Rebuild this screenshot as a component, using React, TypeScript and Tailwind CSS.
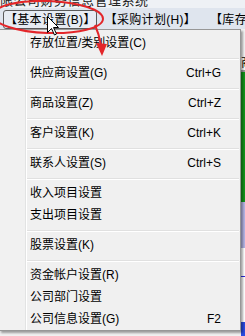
import type { ReactNode } from "react";

type Entry =
  | { kind: "item"; label: string; shortcut?: string }
  | { kind: "sep" };

const entries: Entry[] = [
  { kind: "item", label: "存放位置/类别设置(C)" },
  { kind: "sep" },
  { kind: "item", label: "供应商设置(G)", shortcut: "Ctrl+G" },
  { kind: "sep" },
  { kind: "item", label: "商品设置(Z)", shortcut: "Ctrl+Z" },
  { kind: "sep" },
  { kind: "item", label: "客户设置(K)", shortcut: "Ctrl+K" },
  { kind: "sep" },
  { kind: "item", label: "联系人设置(S)", shortcut: "Ctrl+S" },
  { kind: "sep" },
  { kind: "item", label: "收入项目设置" },
  { kind: "item", label: "支出项目设置" },
  { kind: "sep" },
  { kind: "item", label: "股票设置(K)" },
  { kind: "sep" },
  { kind: "item", label: "资金帐户设置(R)" },
  { kind: "item", label: "公司部门设置" },
  { kind: "item", label: "公司信息设置(G)", shortcut: "F2" },
];

function MenuRow({ children, shortcut }: { children: ReactNode; shortcut?: string }) {
  return (
    <div className="flex h-[22px] items-center justify-between pl-[3px] pr-[19px]">
      <span>{children}</span>
      {shortcut && <span>{shortcut}</span>}
    </div>
  );
}

function Separator() {
  return (
    <div className="mr-[1px] pt-[4px] pb-[2px]">
      <div className="h-px bg-[#e0e0e0]" />
      <div className="h-px bg-white" />
    </div>
  );
}

// annotation drawn on top of the screenshot: red ring, arrow and the mouse pointer
function Annotations() {
  return (
    <svg
      className="pointer-events-none absolute inset-0"
      width={245}
      height={336}
      viewBox="0 0 245 336"
    >
      <ellipse
        cx="48"
        cy="17"
        rx="55"
        ry="16"
        fill="none"
        stroke="#e3262a"
        strokeWidth="2"
        transform="rotate(2 48 17)"
      />
      <path d="M95 25 Q99 34 101 45" fill="none" stroke="#e3262a" strokeWidth="2" />
      <polygon points="96,43 107,44 102,56" fill="#e3262a" />
      <path
        d="M47.5 16.5 L47.5 32.5 L51.5 28.5 L54.5 35 L56.5 34 L53.5 27.5 L58.5 27.5 Z"
        fill="white"
        stroke="black"
        strokeWidth="1"
        strokeLinejoin="round"
      />
    </svg>
  );
}

export default function App() {
  return (
    <div
      className="relative flex h-[336px] w-[245px] flex-col overflow-hidden bg-white text-[12px] text-black"
      style={{ fontFamily: '"Liberation Sans", "Noto Sans CJK SC", sans-serif' }}
    >
      {/* title bar, mostly scrolled off */}
      <div className="h-[8px] overflow-hidden bg-[#eef1f5]">
        <div className="-mt-[6px] whitespace-nowrap text-[13px] leading-[13px] tracking-[0.5px] text-[#222]">
          限公司财务信息管理系统
        </div>
      </div>

      {/* menu bar */}
      <div className="flex h-[21px] items-start whitespace-nowrap bg-[#dfe5ee] pt-[2px]">
        <div className="ml-[3px] flex h-[19px] w-[97px] items-center rounded-[3px] border border-[#5a5a5a] bg-[#e7ecf3] pl-[1px] tracking-[0.3px]">
          【基本设置(B)】
        </div>
        <div className="ml-[8px] flex h-[19px] items-center tracking-[0.3px]">【采购计划(H)】</div>
        <div className="ml-[14px] flex h-[19px] items-center tracking-[0.3px]">【库存设置(X)】</div>
      </div>

      {/* window content behind the dropdown */}
      <div className="relative flex flex-1">
        <div className="flex-1 bg-[#f0f0f0]" />
        <div className="flex w-[4px] flex-col">
          <div className="h-[28px] bg-[#f2f2f2]" />
          <div className="h-[13px] overflow-hidden bg-[#f7f7f7] text-[12px] leading-[13px]">商</div>
          <div className="h-[2px] bg-[#9a9a9a]" />
          <div className="h-[130px] bg-[#12931a]" />
          <div className="h-[46px] bg-[#b3b3e3]" />
          <div className="h-[28px] bg-white" />
          <div className="h-px bg-[#2a2ae0]" />
          <div className="h-[45px] bg-white" />
          <div className="flex-1 bg-[#2a4ae0]" />
        </div>

        {/* dropdown */}
        <div className="absolute left-[-1px] top-0 flex h-[302px] w-[242px] border border-[#979797] bg-[#f0f0f0] shadow-[2px_2px_2px_rgba(0,0,0,0.35)]">
          <div className="w-[26px] border-r border-[#e2e3e3] bg-[#f1f1f1]" />
          <div className="flex flex-1 flex-col border-l border-white pt-[2px]">
            {entries.map((e, i) =>
              e.kind === "sep" ? (
                <Separator key={i} />
              ) : (
                <MenuRow key={i} shortcut={e.shortcut}>
                  {e.label}
                </MenuRow>
              )
            )}
          </div>
        </div>
      </div>

      <Annotations />
    </div>
  );
}
